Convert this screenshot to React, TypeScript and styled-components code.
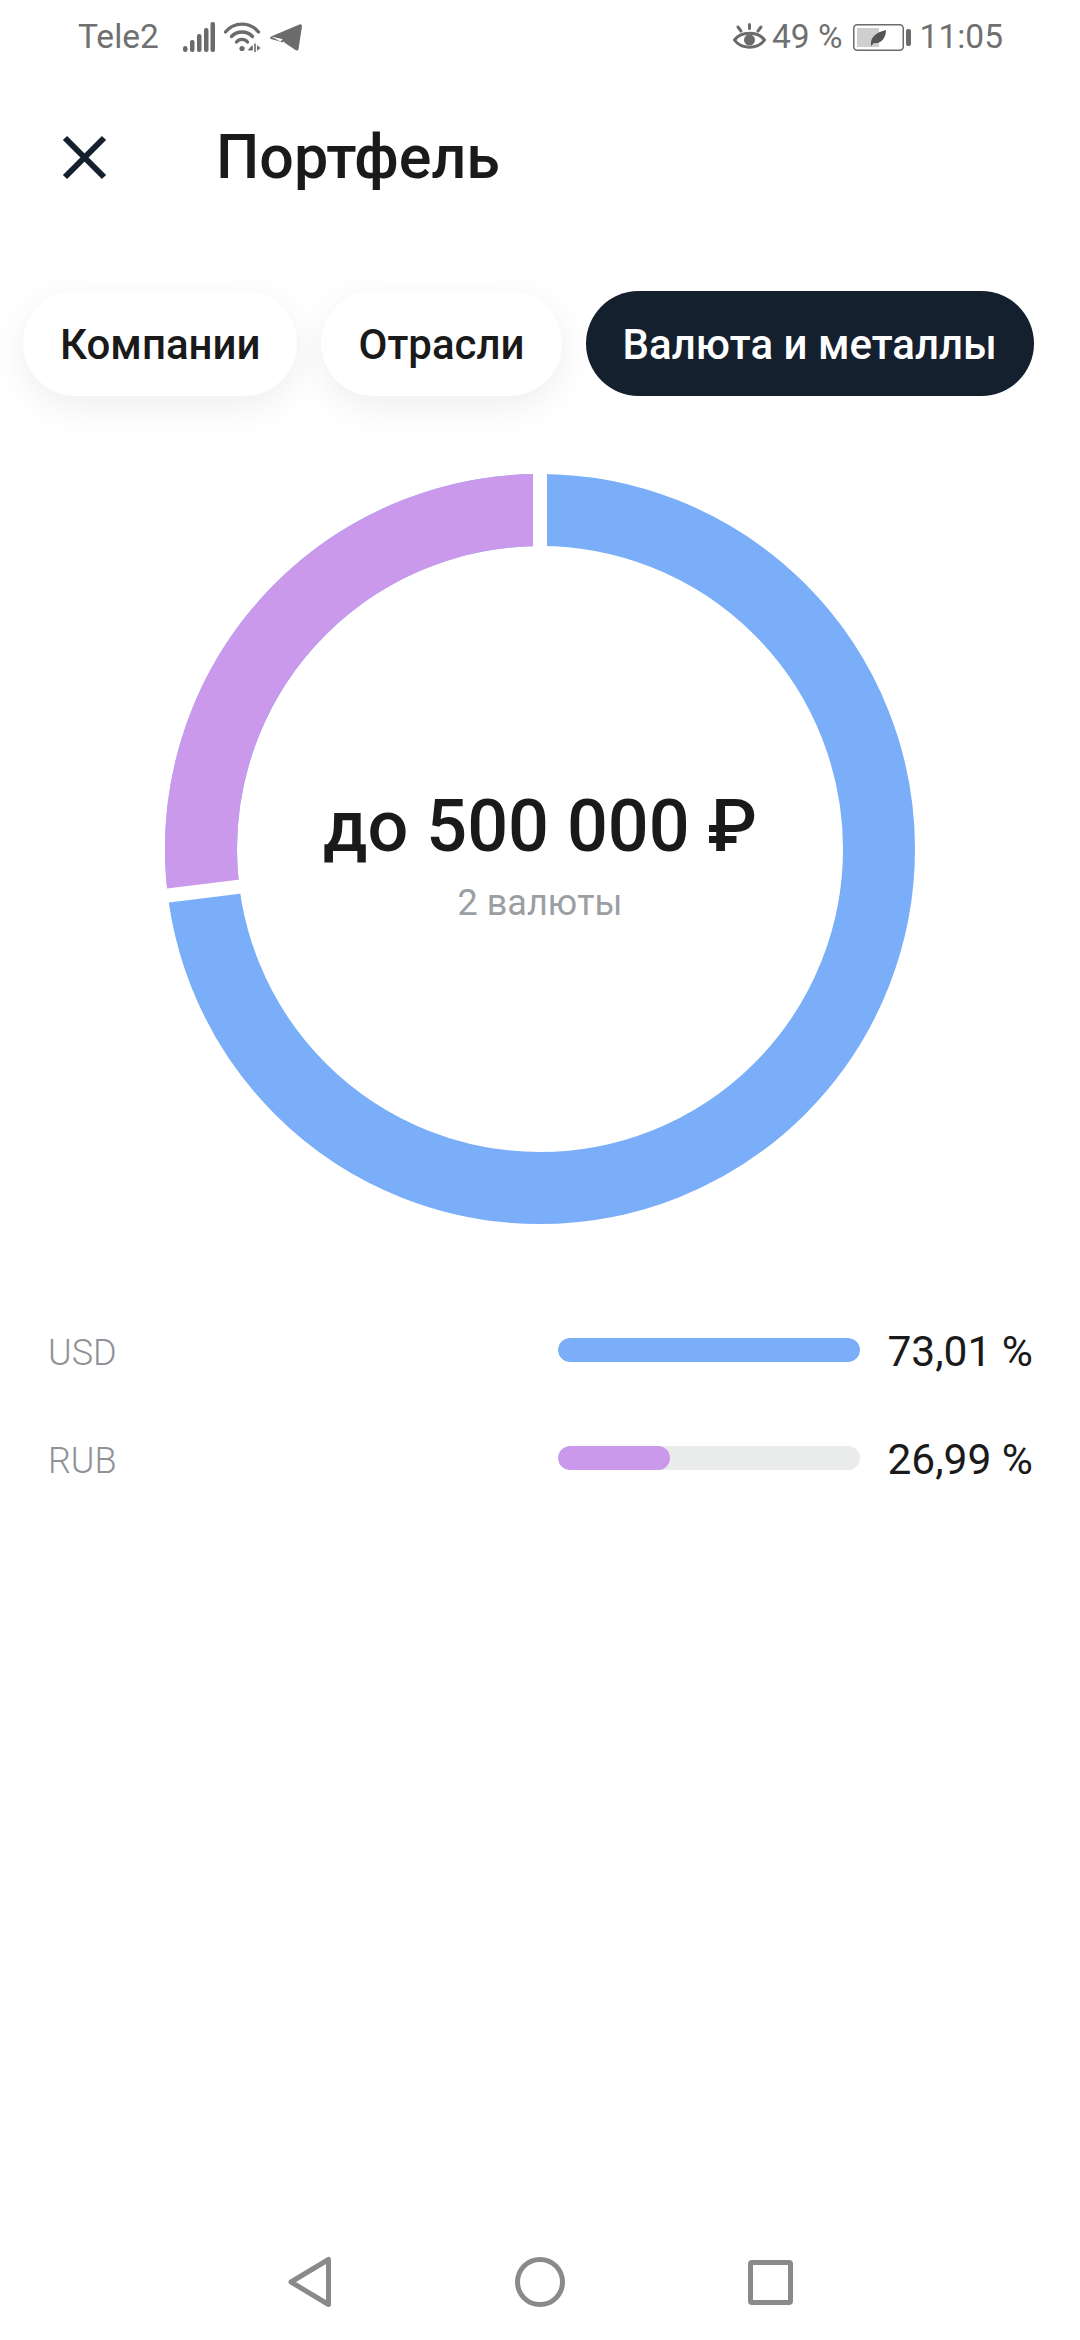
import React from 'react';
import styled, {createGlobalStyle} from 'styled-components';

const GlobalStyle = createGlobalStyle`
  html, body {
    margin: 0;
    padding: 0;
    background: #fff;
  }
  body {
    font-family: Roboto, "Liberation Sans", sans-serif;
  }
`;

const Page = styled.div`
  width: 1080px;
  height: 2340px;
  display: flex;
  flex-direction: column;
  overflow: hidden;
  background: #fff;
`;

const StatusBar = styled.div`
  height: 74px;
  padding: 0 77px 0 78px;
  display: flex;
  align-items: center;
  justify-content: space-between;
  color: #707070;
  font-size: 33.5px;
`;

const StatusGroup = styled.div`
  display: flex;
  align-items: center;
`;

const StatusIcon = styled.svg<{$left: number}>`
  display: block;
  margin-left: ${p => p.$left}px;
  flex: none;
`;

const StatusText = styled.span<{$left?: number}>`
  margin-left: ${p => p.$left || 0}px;
  line-height: 40px;
  white-space: nowrap;
`;

const Header = styled.div`
  height: 166px;
  padding-left: 59px;
  display: flex;
  align-items: center;
`;

const Title = styled.h1`
  margin: 0 0 0 107px;
  font-size: 61px;
  font-weight: 500;
  color: #1a1a1a;
`;

const Chips = styled.div`
  margin-top: 51px;
  padding-left: 23px;
  display: flex;
  gap: 24px;
`;

const Chip = styled.div<{$active?: boolean}>`
  height: 105px;
  padding: 2px 37px 0;
  box-sizing: border-box;
  display: flex;
  align-items: center;
  border-radius: 53px;
  font-size: 42px;
  font-weight: 500;
  white-space: nowrap;
  color: ${p => (p.$active ? '#fff' : '#1a1a1a')};
  background: ${p => (p.$active ? '#15202e' : '#fff')};
  box-shadow: ${p => (p.$active ? 'none' : '0 10px 36px rgba(0, 0, 0, 0.07)')};
`;

const Chart = styled.div`
  margin: 78px auto 0;
  width: 750px;
  height: 750px;
  display: grid;
  place-items: center;
  & > * {
    grid-area: 1 / 1;
  }
`;

const ChartCenter = styled.div`
  padding-top: 10px;
  display: flex;
  flex-direction: column;
  align-items: center;
`;

const Total = styled.div`
  font-size: 72px;
  font-weight: 500;
  color: #1a1a1a;
  white-space: nowrap;
`;

const Caption = styled.div`
  margin-top: 13px;
  font-size: 36px;
  color: #9b9ea3;
`;

const Legend = styled.div`
  margin-top: 103px;
  padding: 0 47px 0 48px;
  display: flex;
  flex-direction: column;
  gap: 60px;
`;

const LegendRow = styled.div`
  height: 48px;
  display: flex;
  align-items: center;
`;

const Currency = styled.div`
  flex: 1;
  padding-top: 3px;
  font-size: 36px;
  font-weight: 300;
  color: #8f9297;
`;

const Track = styled.div`
  width: 302px;
  height: 24px;
  margin-top: -2px;
  border-radius: 12px;
  background: #e9eceb;
  overflow: hidden;
`;

const Fill = styled.div<{$color: string}>`
  height: 100%;
  border-radius: 12px;
  background: ${p => p.$color};
`;

const Percent = styled.div`
  width: 173px;
  text-align: right;
  font-size: 42.5px;
  color: #1a1a1a;
  white-space: nowrap;
`;

const NavBar = styled.div`
  margin-top: auto;
  height: 100px;
  padding-bottom: 8px;
  display: flex;
  align-items: center;
  justify-content: center;
  gap: 183px;
`;

const BLUE = '#7baef8';
const PURPLE = '#cb99ec';

const rows = [
  {name: 'USD', value: 73.01, color: BLUE},
  {name: 'RUB', value: 26.99, color: PURPLE},
];

const StatusLeft = () => (
  <StatusGroup>
    <StatusText>Tele2</StatusText>
    <StatusIcon $left={24} width="32" height="30" viewBox="0 0 32 30" fill="#6b6b6b">
      <rect x="0" y="24" width="4.5" height="6" rx="2.2"/>
      <rect x="7" y="18" width="4.5" height="12" rx="2"/>
      <rect x="14" y="12" width="4.5" height="18" rx="2"/>
      <rect x="21" y="6" width="4.5" height="24" rx="2"/>
      <rect x="27.5" y="0" width="4.5" height="30" rx="2"/>
    </StatusIcon>
    <StatusIcon $left={9} width="37" height="30" viewBox="0 0 37 30" fill="none" stroke="#6b6b6b" strokeWidth="3.4" strokeLinecap="round">
      <path d="M1.5 10 C10 -0.5 26 -0.5 34.5 10"/>
      <path d="M7.5 14.5 C13 8.5 23 8.5 28.5 14.5"/>
      <path d="M12.5 20 C15.5 16.5 20.5 16.5 23.5 20"/>
      <circle cx="18" cy="26.5" r="2.6" fill="#6b6b6b" stroke="none"/>
      <path d="M28 24 L24.5 28 H28 Z" fill="#6b6b6b" strokeWidth="1"/>
      <path d="M31 22 V29.5" strokeWidth="1.6"/>
      <path d="M33 23 L36.5 26 L33 29 Z" fill="#6b6b6b" stroke="none"/>
    </StatusIcon>
    <StatusIcon $left={9} width="32" height="27" viewBox="0 0 32 27" fill="#6b6b6b">
      <path d="M1 12.5 L29.5 0.5 Q32 -0.3 32 2.5 L28.5 25 Q28 27.5 25.5 26 L15 19 L12 15 Z M1 12.5 Q-0.8 14 1 15 L10 17.5 L24 8 L12.5 18.5 Z"/>
    </StatusIcon>
  </StatusGroup>
);

const StatusRight = () => (
  <StatusGroup>
    <StatusIcon $left={0} width="33" height="28" viewBox="0 0 33 28" fill="none" stroke="#6b6b6b" strokeWidth="3" strokeLinecap="round">
      <path d="M1.5 17 C8 8 25 8 31.5 17 C25 26.500 8 26.500 1.500 17 Z"/>
      <circle cx="16.500" cy="17" r="5.500" fill="#6b6b6b" stroke="none"/>
      <path d="M16.500 1.500 V5.500 M5 4 L8 8 M28 4 L25 8"/>
    </StatusIcon>
    <StatusText $left={6}>49 %</StatusText>
    <StatusIcon $left={10} width="58" height="27" viewBox="0 0 58 27" fill="none">
      <rect x="0.750" y="0.750" width="49.500" height="25.500" rx="3.500" stroke="#6b6b6b" strokeWidth="1.500"/>
      <rect x="4" y="4" width="22" height="19" fill="#cfcfcf"/>
      <rect x="53" y="5" width="5" height="17" rx="2" fill="#6b6b6b"/>
      <path d="M18 21 C17 13 24 8 33 6 C33 15 27 20 21 19 L18 22 Z" fill="#555"/>
    </StatusIcon>
    <StatusText $left={9}>11:05</StatusText>
  </StatusGroup>
);

const CloseIcon = () => (
  <svg width="50" height="50" viewBox="0 0 50 50" fill="none" stroke="#15202e" strokeWidth="6">
    <path d="M6 6 L45 45 M45 6 L6 45"/>
  </svg>
);

const Donut = () => (
  <svg width="750" height="750" viewBox="0 0 750 750" fill="none" strokeWidth="72">
    <circle cx="375" cy="375" r="339" stroke={BLUE}/>
    <path d="M375 36 A339 339 0 0 0 38.600 417.250" stroke={PURPLE}/>
    <path d="M375 -2 V80 M-3 422.200 L80 412" stroke="#fff" strokeWidth="14"/>
  </svg>
);

const BackIcon = () => (
  <svg width="44" height="52" viewBox="0 0 44 52" fill="none" stroke="#8a8a8a" strokeWidth="5" strokeLinejoin="round">
    <path d="M40.500 3.500 V48.500 L3 26 Z"/>
  </svg>
);

const HomeIcon = () => (
  <svg width="50" height="50" viewBox="0 0 50 50" fill="none" stroke="#8a8a8a" strokeWidth="5">
    <circle cx="25" cy="25" r="22.500"/>
  </svg>
);

const RecentIcon = () => (
  <svg width="45" height="45" viewBox="0 0 45 45" fill="none" stroke="#8a8a8a" strokeWidth="5" strokeLinejoin="round">
    <rect x="2.500" y="2.500" width="40" height="40" rx="1.500"/>
  </svg>
);

const App = () => {
  return (
    <>
      <GlobalStyle/>
      <Page>
        <StatusBar>
          <StatusLeft/>
          <StatusRight/>
        </StatusBar>
        <Header>
          <CloseIcon/>
          <Title>Портфель</Title>
        </Header>
        <Chips>
          <Chip>Компании</Chip>
          <Chip>Отрасли</Chip>
          <Chip $active>Валюта и металлы</Chip>
        </Chips>
        <Chart>
          <Donut/>
          <ChartCenter>
            <Total>до 500 000 ₽</Total>
            <Caption>2 валюты</Caption>
          </ChartCenter>
        </Chart>
        <Legend>
          {rows.map(row =>
            <LegendRow key={row.name}>
              <Currency>{row.name}</Currency>
              <Track>
                <Fill $color={row.color} style={{width: `${(row.value / rows[0].value) * 100}%`}}/>
              </Track>
              <Percent>{row.value.toFixed(2).replace('.', ',')} %</Percent>
            </LegendRow>
          )}
        </Legend>
        <NavBar>
          <BackIcon/>
          <HomeIcon/>
          <RecentIcon/>
        </NavBar>
      </Page>
    </>
  );
};

export default App;
